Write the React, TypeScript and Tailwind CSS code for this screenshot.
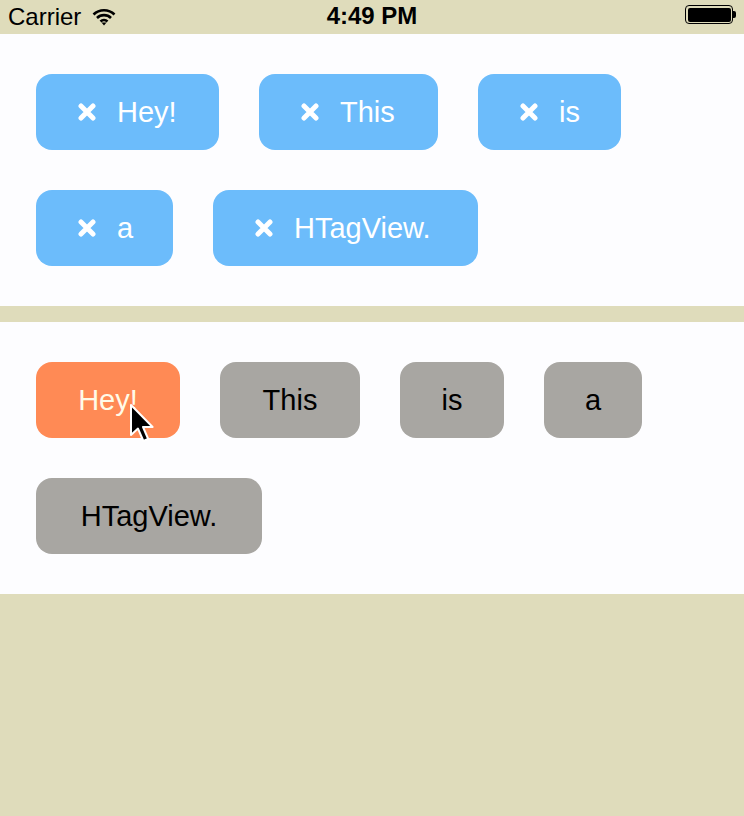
import React from "react";

const font = { fontFamily: '"Liberation Sans", Arial, sans-serif' };

function XIcon() {
  return (
    <svg width="18" height="18" viewBox="0 0 18 18" className="shrink-0">
      <path d="M3 3 L15 15 M15 3 L3 15" stroke="white" strokeWidth="5" strokeLinecap="round" />
    </svg>
  );
}

function Wifi() {
  return (
    <svg width="24" height="18" viewBox="0 0 24 18">
      <path d="M1.5 6.5 A15 15 0 0 1 22.5 6.5" stroke="black" strokeWidth="2.6" fill="none" />
      <path d="M5 10 A10 10 0 0 1 19 10" stroke="black" strokeWidth="2.6" fill="none" />
      <path d="M8.5 13.5 A5 5 0 0 1 15.5 13.5" stroke="black" strokeWidth="2.6" fill="none" />
      <path d="M9.5 14.5 L12 17.5 L14.5 14.5 Z" fill="black" />
    </svg>
  );
}

function Cursor() {
  return (
    <svg width="26" height="40" viewBox="0 0 13 20" className="absolute left-[93px] top-[41px]">
      <path d="M1 1 L1 16 L4.5 12.8 L7.2 19 L9.6 18 L7 12 L11.8 12 Z" fill="black" stroke="white" strokeWidth="1" strokeLinejoin="round" />
    </svg>
  );
}

const blueTags = [
  { t: "Hey!", w: "w-[183px]" },
  { t: "This", w: "w-[179px]" },
  { t: "is", w: "w-[143px]" },
  { t: "a", w: "w-[137px]" },
  { t: "HTagView.", w: "w-[265px]" },
];

const grayTags = [
  { t: "This", w: "w-[140px]" },
  { t: "is", w: "w-[104px]" },
  { t: "a", w: "w-[98px]" },
  { t: "HTagView.", w: "w-[226px]" },
];

export default function App() {
  return (
    <div className="w-[744px] h-[816px] bg-[#dfdcbb] overflow-hidden" style={font}>
      <div className="relative h-[34px] flex items-center px-[8px]">
        <span className="text-[24px] leading-none text-black">Carrier</span>
        <span className="ml-[11px] flex items-center"><Wifi /></span>
        <span className="absolute left-0 right-0 top-[4px] text-center text-[24px] font-bold leading-none text-black">4:49 PM</span>
        <div className="absolute right-[8px] top-[5px] flex items-center">
          <div className="w-[48px] h-[19px] rounded-[4px] border-[1.5px] border-black p-[1.5px]">
            <div className="w-full h-full rounded-[2px] bg-black" />
          </div>
          <div className="w-[3px] h-[7px] bg-black rounded-r-[2px]" />
        </div>
      </div>

      <div className="bg-[#fdfdff] pl-[36px] pr-[20px] py-[40px] flex flex-wrap gap-[40px]">
        {blueTags.map((tag) => (
          <div
            key={tag.t}
            className={`${tag.w} h-[76px] rounded-[16px] bg-[#6cbcfb] flex items-center pl-[42px] gap-[21px] text-white text-[29px]`}
          >
            <XIcon />
            <span className="leading-none">{tag.t}</span>
          </div>
        ))}
      </div>

      <div className="h-[16px]" />

      <div className="bg-[#fdfdff] pl-[36px] pr-[20px] py-[40px] flex flex-wrap gap-[40px]">
        <div className="relative w-[144px] h-[76px] rounded-[16px] bg-[#ff8a55] flex items-center justify-center text-[#fffbe8] text-[29px]">
          <span className="leading-none">Hey!</span>
          <Cursor />
        </div>
        {grayTags.map((tag) => (
          <div
            key={tag.t}
            className={`${tag.w} h-[76px] rounded-[16px] bg-[#a8a6a2] flex items-center justify-center text-black text-[29px]`}
          >
            <span className="leading-none">{tag.t}</span>
          </div>
        ))}
      </div>
    </div>
  );
}
